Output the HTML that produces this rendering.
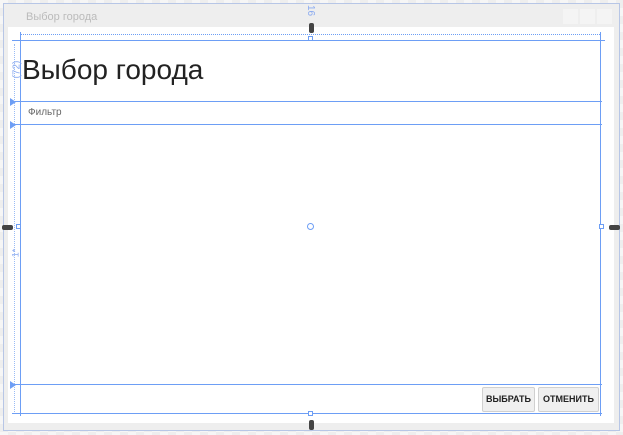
<!DOCTYPE html>
<html><head><meta charset="utf-8"><style>
*{margin:0;padding:0;box-sizing:border-box}
body{width:623px;height:435px;overflow:hidden;position:relative;font-family:"Liberation Sans","DejaVu Sans",sans-serif;
background-color:#f6f6f6;background-image:linear-gradient(45deg,#eeeeee 25%,transparent 25%,transparent 75%,#eeeeee 75%),linear-gradient(45deg,#eeeeee 25%,transparent 25%,transparent 75%,#eeeeee 75%);background-size:16px 16px;background-position:0 0,8px 8px}
.a{position:absolute}
.hl{position:absolute;height:1px;background:#6d9ef5}
.vl{position:absolute;width:1px;background:#6d9ef5}
.btn{position:absolute;top:387px;height:25px;background:#f0f0f0;border:1px solid #d0d0d0;border-radius:2px;font-size:9px;font-weight:bold;color:#222;text-align:center;line-height:23px}
.pill{position:absolute;width:11px;height:5px;background:#444;border-radius:2px}
.pv{position:absolute;width:5px;height:10px;background:#444;border-radius:2px}
.sq{position:absolute;width:5px;height:5px;border:1px solid #6d9ef5;background:#fff}
</style></head><body>
<div class="a" style="left:3px;top:3px;width:617px;height:428px;border:1px solid #b7c6e6;background:#eeeeee"></div>
<div class="a" style="left:26px;top:11px;font-size:11px;color:#bbb">Выбор города</div>
<div class="a" style="left:563px;top:9px;width:15px;height:15px;background:#f4f4f4"></div>
<div class="a" style="left:580px;top:9px;width:15px;height:15px;background:#f4f4f4"></div>
<div class="a" style="left:597px;top:9px;width:15px;height:15px;background:#f4f4f4"></div>
<div class="a" style="left:8px;top:27px;width:606px;height:396px;background:#fff"></div>
<div class="a" style="left:20px;top:34px;width:580px;border-top:1px dotted #6d9ef5"></div>
<div class="hl" style="left:12px;top:40px;width:593px"></div>
<div class="hl" style="left:12px;top:101px;width:590px"></div>
<div class="hl" style="left:12px;top:124px;width:590px"></div>
<div class="hl" style="left:12px;top:384px;width:590px"></div>
<div class="hl" style="left:12px;top:413px;width:590px"></div>
<div class="vl" style="left:20px;top:32px;height:384px"></div>
<div class="vl" style="left:600px;top:32px;height:384px"></div>
<div class="a" style="left:14px;top:44px;height:368px;border-left:1px dotted #9bbcf5"></div>
<div class="a" style="left:22px;top:54px;font-size:28px;color:#222">Выбор города</div>
<div class="a" style="left:28px;top:107px;font-size:10px;color:#666">Фильтр</div>
<div class="a" style="left:8px;top:64px;font-size:10px;color:#8aaaf0;transform:rotate(-90deg)">(72)</div>
<div class="a" style="left:305px;top:5px;font-size:10px;color:#8aaaf0;transform:rotate(90deg)">16</div>
<div class="a" style="left:11px;top:248px;font-size:9px;color:#8aaaf0;transform:rotate(-90deg)">1*</div>
<div class="a" style="left:10px;top:98px;width:0;height:0;border-top:4px solid transparent;border-bottom:4px solid transparent;border-left:6px solid #6d9ef5"></div>
<div class="a" style="left:10px;top:121px;width:0;height:0;border-top:4px solid transparent;border-bottom:4px solid transparent;border-left:6px solid #6d9ef5"></div>
<div class="a" style="left:10px;top:381px;width:0;height:0;border-top:4px solid transparent;border-bottom:4px solid transparent;border-left:6px solid #6d9ef5"></div>
<div class="pv" style="left:309px;top:23px"></div>
<div class="pv" style="left:309px;top:420px"></div>
<div class="pill" style="left:2px;top:225px"></div>
<div class="pill" style="left:609px;top:225px"></div>
<div class="sq" style="left:308px;top:36px"></div>
<div class="sq" style="left:308px;top:411px"></div>
<div class="sq" style="left:16px;top:224px"></div>
<div class="sq" style="left:599px;top:224px"></div>
<div class="a" style="left:307px;top:223px;width:7px;height:7px;border:1px solid #6d9ef5;border-radius:50%;background:#fff"></div>
<div class="btn" style="left:482px;width:53px">ВЫБРАТЬ</div>
<div class="btn" style="left:538px;width:61px">ОТМЕНИТЬ</div>
</body></html>
